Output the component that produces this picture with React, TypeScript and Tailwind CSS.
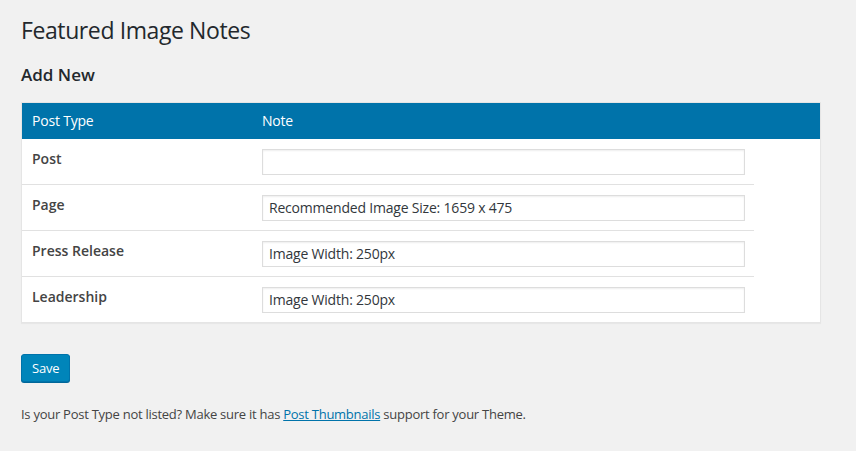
import React from 'react'

const rows = [
  { type: 'Post', note: '' },
  { type: 'Page', note: 'Recommended Image Size: 1659 x 475' },
  { type: 'Press Release', note: 'Image Width: 250px' },
  { type: 'Leadership', note: 'Image Width: 250px' },
]

const App = () => {
  return (
    <div className="min-h-[451px] w-full bg-[#f1f1f1] px-[21px] pt-[15px] font-['Open_Sans',sans-serif] text-[#444]">
      <h1 className="text-[23px] leading-[30px] font-normal tracking-[-0.4px] text-[#23282d]">Featured Image Notes</h1>
      <h2 className="mt-[20px] text-[17px] leading-[20px] font-semibold text-[#23282d]">Add New</h2>

      <div className="mt-[17px] w-[800px] border border-[#e5e5e5] bg-white shadow-[0_1px_1px_rgba(0,0,0,0.04)]">
        <div className="flex bg-[#0073aa] py-2 text-[14px] leading-[19.6px] tracking-[-0.2px] text-white">
          <div className="w-[230px] pl-[10px]">Post Type</div>
          <div className="pl-[10px]">Note</div>
        </div>
        <div className="w-[732px]">
          {rows.map((r, i) => (
            <div key={r.type} className={`flex ${i < rows.length - 1 ? 'border-b border-[#e1e1e1]' : ''}`}>
              <div className="w-[230px] pt-[10px] pl-[10px] text-[14px] leading-[19.6px] font-semibold text-[#444]">
                {r.type}
              </div>
              <div className="flex-1 pt-[10px] pb-[9px] pl-[10px] pr-[9px]">
                <input
                  type="text"
                  defaultValue={r.note}
                  className="h-[26px] w-full border border-[#ddd] bg-white px-[6px] text-[14px] tracking-[-0.2px] text-[#32373c] shadow-[inset_0_1px_2px_rgba(0,0,0,0.07)] outline-none"
                />
              </div>
            </div>
          ))}
        </div>
      </div>

      <button className="mt-[31px] h-[28px] rounded-[3px] border border-[#0073aa] bg-[#0085ba] px-[10px] text-[13px] leading-[26px] tracking-[-0.2px] text-white shadow-[0_1px_0_#006799]">
        Save
      </button>

      <p className="mt-[22px] text-[13px] leading-[20px] tracking-[-0.26px] text-[#444]">
        Is your Post Type not listed? Make sure it has{' '}
        <a href="#" className="text-[#0073aa] underline">
          Post Thumbnails
        </a>{' '}
        support for your Theme.
      </p>
    </div>
  )
}

export default App
